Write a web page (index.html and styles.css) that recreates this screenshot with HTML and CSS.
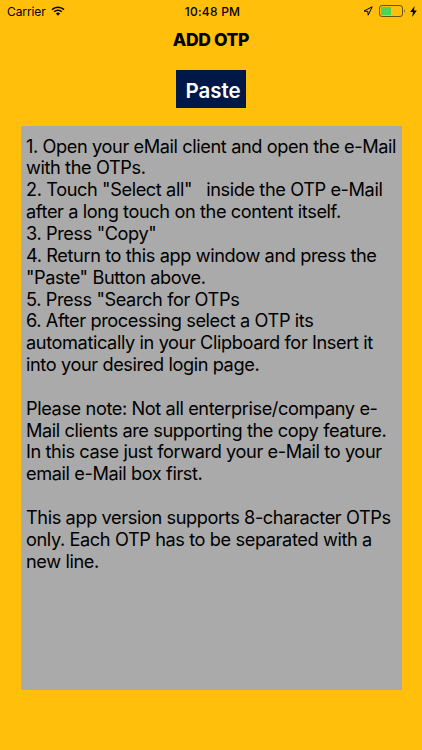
FILE: index.html
```html
<!DOCTYPE html>
<html lang="en">

<head>
    <meta charset="UTF-8">
    <meta name="viewport" content="width=device-width, initial-scale=1.0">
    <title>Add OTP</title>
    <link rel="stylesheet" href="styles.css">
</head>

<body>
    <div class="status">
        <div class="left">
            <span class="carrier">Carrier</span>
            <svg class="wifi" width="14" height="10" viewBox="0 0 14 10">
                <path d="M1 3.6a8.6 8.6 0 0 1 12 0M3.2 5.8a5.4 5.4 0 0 1 7.6 0" fill="none" stroke="#000" stroke-width="1.5" />
                <path d="M4.9 7.5a3 3 0 0 1 4.2 0L7 9.7z" />
            </svg>
        </div>
        <div class="time">10:48 PM</div>
        <div class="right">
            <svg class="location" width="10" height="10" viewBox="0 0 10 10">
                <path d="M9.2 0.8L1 5l3.8 0.4L5.2 9.2z" fill="none" stroke="#000" stroke-width="1" />
            </svg>
            <svg class="battery" width="27" height="12" viewBox="0 0 27 12">
                <rect x="0.5" y="0.5" width="23" height="11" rx="2.5" fill="none" stroke="#6b5208" stroke-width="1" />
                <rect x="2" y="2" width="10" height="8" rx="0.8" fill="#45d65a" />
                <path d="M25 4q1.8 2 0 4z" fill="#6b5208" />
            </svg>
            <svg class="bolt" width="7" height="11" viewBox="0 0 6 10">
                <path d="M4 0L0 5.5h2.5L1.8 10 6 4.2H3.4z" />
            </svg>
        </div>
    </div>
    <h1 class="title">ADD OTP</h1>
    <button class="paste">Paste</button>
    <div class="text">
        <p>1. Open your eMail client and open the e-Mail</p>
        <p>with the OTPs.</p>
        <p>2. Touch "Select all" &nbsp; inside the OTP e-Mail</p>
        <p>after a long touch on the content itself.</p>
        <p>3. Press "Copy"</p>
        <p>4. Return to this app window and press the</p>
        <p>"Paste" Button above.</p>
        <p>5. Press "Search for OTPs</p>
        <p>6. After processing select a OTP its</p>
        <p>automatically in your Clipboard for Insert it</p>
        <p>into your desired login page.</p>
        <p class="space">Please note: Not all enterprise/company e-</p>
        <p>Mail clients are supporting the copy feature.</p>
        <p>In this case just forward your e-Mail to your</p>
        <p>email e-Mail box first.</p>
        <p class="space">This app version supports 8-character OTPs</p>
        <p>only. Each OTP has to be separated with a</p>
        <p>new line.</p>
    </div>
</body>

</html>
```
FILE: styles.css
```css
body {
    margin: 0;
    height: 750px;
    overflow: hidden;
    background-color: #ffbf0b;
    font-family: Inter, "Liberation Sans", sans-serif;
    color: #000;
}

.status {
    display: grid;
    grid-template-columns: 1fr auto 1fr;
    align-items: center;
    height: 22px;
    padding: 0 5px 0 7px;
    font-size: 12px;
}

.left,
.right {
    display: flex;
    align-items: center;
}

.left {
    gap: 5px;
}

.carrier {
    letter-spacing: -0.1px;
}

.right {
    justify-content: flex-end;
    gap: 4px;
}

.location {
    margin-right: 2px;
}

.time {
    padding-left: 1px;
    font-weight: 500;
    letter-spacing: 0.25px;
}

.title {
    margin: 6px 0 0;
    height: 24px;
    line-height: 24px;
    font-size: 17.5px;
    font-weight: 800;
    letter-spacing: -0.35px;
    text-align: center;
}

.paste {
    display: block;
    width: 70px;
    height: 38px;
    margin: 18px auto 0;
    padding: 2px 0 0 4px;
    border: 0;
    background-color: #001848;
    color: #fff;
    font-family: inherit;
    font-size: 20.5px;
    font-weight: 600;
}

.text {
    box-sizing: border-box;
    width: 381px;
    height: 564px;
    margin: 18px 0 0 21px;
    padding: 9.6px 5px;
    background-color: #aaa;
    font-size: 18.2px;
    line-height: 21.85px;
    letter-spacing: -0.4px;
    white-space: nowrap;
}

.text p {
    margin: 0;
}

.text .space {
    margin-top: 21.85px;
}
```
